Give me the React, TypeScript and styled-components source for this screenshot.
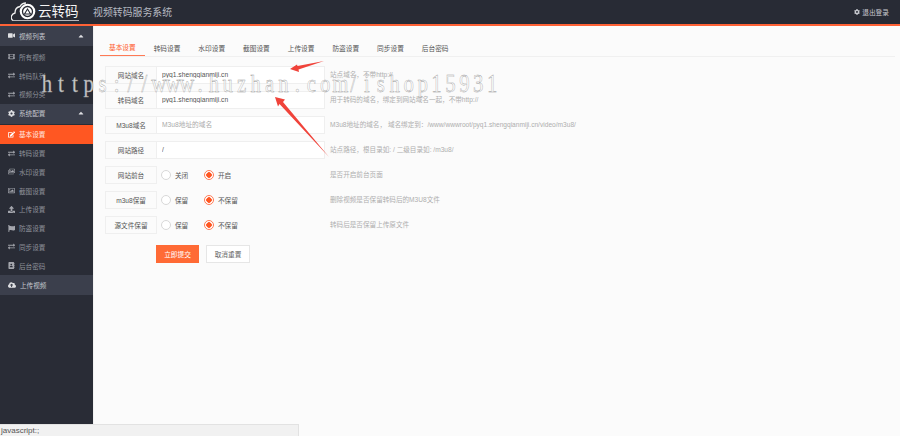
import React from 'react'
import styled, { createGlobalStyle } from 'styled-components'
import {
  FaAddressBook, FaCaretUp, FaCloudUploadAlt, FaCog, FaEdit, FaExchangeAlt, FaFilm, FaFlag,
  FaRegImage, FaUpload, FaVideo, FaRegImages,
} from 'react-icons/fa'

const GlobalStyle = createGlobalStyle`
  html, body { margin: 0; padding: 0; height: 100%; overflow: hidden; }
  body { font-family: "Liberation Sans", "Noto Sans CJK SC", sans-serif; background: #fbfbfb; }
  #root { height: 100%; }
`

const tabs = ['基本设置', '转码设置', '水印设置', '截图设置', '上传设置', '防盗设置', '同步设置', '后台密码']
const watermark = 'https://www.huzhan.com/ishop15931'

const Logo = () => (
  <LogoWrap>
    <svg width="70" height="21" viewBox="0 0 70 21">
      <path d="M2 18.500c-3-2-2-6.500 2-7.500 0-3.500 2-6 5-6.500 1-2 3-3.500 6-3.500" fill="none" stroke="#f2f2f2" strokeWidth="1.300" />
      <path d="M2 18.500h66" stroke="#d8d9dc" strokeWidth="0.800" />
      <circle cx="16.500" cy="9.500" r="7.800" fill="#fff" />
      <circle cx="16.500" cy="9.500" r="5" fill="none" stroke="#282b35" strokeWidth="1.300" />
      <path d="M13.500 12l3-5 3 5z" fill="none" stroke="#282b35" strokeWidth="1.100" />
    </svg>
    <LogoText>云转码</LogoText>
  </LogoWrap>
)

const App = () => {
  return (
    <Page>
      <GlobalStyle />
      <Header>
        <Logo />
        <Title>视频转码服务系统</Title>
        <Logout><FaCog size={6} />退出登录</Logout>
      </Header>
      <Body>
        <Sidebar>
          <Group><FaVideo size={7} /><span>视频列表</span><Caret><FaCaretUp size={8} /></Caret></Group>
          <SubList>
            <Item><FaFilm size={7} />所有视频</Item>
            <Item><FaExchangeAlt size={7} />转码队列</Item>
            <Item><FaExchangeAlt size={7} />视频分类</Item>
          </SubList>
          <Group><FaCog size={7} /><span>系统配置</span><Caret><FaCaretUp size={8} /></Caret></Group>
          <SubList>
            <Item $active><FaEdit size={7} />基本设置</Item>
            <Item><FaExchangeAlt size={7} />转码设置</Item>
            <Item><FaRegImages size={7} />水印设置</Item>
            <Item><FaRegImage size={7} />截图设置</Item>
            <Item><FaUpload size={7} />上传设置</Item>
            <Item><FaFlag size={7} />防盗设置</Item>
            <Item><FaExchangeAlt size={7} />同步设置</Item>
            <Item><FaAddressBook size={7} />后台密码</Item>
          </SubList>
          <Group><FaCloudUploadAlt size={8} /><span>上传视频</span></Group>
        </Sidebar>
        <Main>
          <Tabs>
            {tabs.map((t, i) => <Tab key={t} $active={i === 0}>{t}</Tab>)}
          </Tabs>
          <Form>
            <Row>
              <Label>网站域名</Label>
              <Input defaultValue="pyq1.shengqianmiji.cn" />
              <Hint>站点域名，不带http://</Hint>
            </Row>
            <Row>
              <Label>转码域名</Label>
              <Input defaultValue="pyq1.shengqianmiji.cn" />
              <Hint>用于转码的域名，绑定到网站域名一起，不带http://</Hint>
            </Row>
            <Row>
              <Label>M3u8域名</Label>
              <Input placeholder="M3u8地址的域名" />
              <Hint>M3u8地址的域名， 域名绑定到：/www/wwwroot/pyq1.shengqianmiji.cn/video/m3u8/</Hint>
            </Row>
            <Row>
              <Label>网站路径</Label>
              <Input defaultValue="/" />
              <Hint>站点路径，根目录如: / 二级目录如: /m3u8/</Hint>
            </Row>
            <Row>
              <Label>网站前台</Label>
              <Radios>
                <Radio><Dot />关闭</Radio>
                <Radio><Dot $on />开启</Radio>
              </Radios>
              <Hint>是否开启前台页面</Hint>
            </Row>
            <Row>
              <Label>m3u8保留</Label>
              <Radios>
                <Radio><Dot />保留</Radio>
                <Radio><Dot $on />不保留</Radio>
              </Radios>
              <Hint>删除视频是否保留转码后的M3U8文件</Hint>
            </Row>
            <Row>
              <Label>源文件保留</Label>
              <Radios>
                <Radio><Dot />保留</Radio>
                <Radio><Dot $on />不保留</Radio>
              </Radios>
              <Hint>转码后是否保留上传原文件</Hint>
            </Row>
          </Form>
          <Actions>
            <Submit>立即提交</Submit>
            <Reset>取消重置</Reset>
          </Actions>
        </Main>
      </Body>
      <Watermark>
        {watermark.split('').map((c, i) => <WatermarkChar key={i}>{c}</WatermarkChar>)}
      </Watermark>
      <Arrows width="900" height="436" viewBox="0 0 900 436">
        <polygon points="290,69 297,64.500 297.500,66 324,61 298.500,69.500 299,72" fill="#f0433a" />
        <polygon points="275,97 285,99.500 283,102 329,157 279.500,104 278,106.500" fill="#f0433a" />
      </Arrows>
      <StatusBar>javascript:;</StatusBar>
    </Page>
  )
}

const Page = styled.div`
  height: 436px;
  display: flex;
  flex-direction: column;
  position: relative;
  overflow: hidden;
`
const Header = styled.header`
  height: 24px;
  flex: none;
  display: flex;
  align-items: center;
  background: #282b35;
  border-bottom: 2px solid #ff6236;
  padding: 0 11px;
`
const LogoWrap = styled.div`
  width: 82px;
  height: 21px;
  position: relative;
`
const LogoText = styled.span`
  position: absolute;
  left: 27px;
  top: 2px;
  font-size: 13.500px;
  line-height: 16px;
  font-weight: 400;
  color: #f4f4f4;
`
const Title = styled.div`
  font-size: 9.900px;
  color: #b6b9c1;
`
const Logout = styled.div`
  margin-left: auto;
  display: flex;
  align-items: center;
  gap: 2px;
  font-size: 6.700px;
  color: #c8cad0;
`
const Body = styled.div`
  flex: 1;
  display: flex;
  min-height: 0;
`
const Sidebar = styled.aside`
  width: 93px;
  flex: none;
  background: #292c36;
  font-size: 6.600px;
`
const Group = styled.div`
  height: 20px;
  display: flex;
  align-items: center;
  gap: 4px;
  padding: 0 8px 1px;
  box-sizing: border-box;
  background: #3b3f4c;
  color: #c4c6cc;
  svg { flex: none; color: #dfe0e3; }
`
const Caret = styled.span`
  margin-left: auto;
  display: flex;
`
const SubList = styled.div`
  padding-top: 1.400px;
`
const Item = styled.div<{ $active?: boolean }>`
  height: 18.750px;
  display: flex;
  align-items: center;
  gap: 4px;
  padding-left: 8px;
  background: ${p => (p.$active ? '#ff5722' : 'transparent')};
  color: ${p => (p.$active ? '#ffe9e0' : '#8f929b')};
  svg { flex: none; color: ${p => (p.$active ? '#fff' : '#a4a6ad')}; }
`
const Main = styled.main`
  flex: 1;
  min-width: 0;
  background: #fbfbfb;
  border-left: 1px solid #f1f1f1;
  padding: 13px 5px 0 6px;
  font-size: 6.600px;
`
const Tabs = styled.nav`
  display: flex;
  height: 17px;
  border-bottom: 1px solid #f0f0f0;
`
const Tab = styled.div<{ $active?: boolean }>`
  width: 44.700px;
  height: 17px;
  box-sizing: border-box;
  display: flex;
  align-items: center;
  justify-content: center;
  font-size: 6.700px;
  color: ${p => (p.$active ? '#ff5a2c' : '#555')};
  border-bottom: ${p => (p.$active ? '1px solid #ff7a55' : 'none')};
`
const Form = styled.div`
  display: grid;
  row-gap: 7.500px;
  margin-top: 9px;
  padding-left: 5px;
`
const Row = styled.div`
  display: flex;
  align-items: center;
  height: 17.500px;
`
const Label = styled.div`
  width: 52px;
  height: 100%;
  flex: none;
  box-sizing: border-box;
  display: flex;
  align-items: center;
  justify-content: center;
  background: #fbfbfb;
  border: 1px solid #efefef;
  color: #555;
`
const Input = styled.input`
  width: 169px;
  height: 100%;
  flex: none;
  box-sizing: border-box;
  margin: 0 5px 0 -1px;
  padding: 0 0 0 5px;
  background: #fff;
  border: 1px solid #efefef;
  outline: none;
  font: 6.700px "Liberation Sans", "Noto Sans CJK SC", sans-serif;
  color: #555;
  &::placeholder { color: #aaa; opacity: 1; }
`
const Radios = styled.div`
  width: 173px;
  flex: none;
  display: flex;
  padding-left: 4px;
  box-sizing: border-box;
`
const Radio = styled.label`
  width: 43px;
  display: flex;
  align-items: center;
  gap: 4px;
  color: #555;
  white-space: nowrap;
`
const Dot = styled.span<{ $on?: boolean }>`
  width: 10px;
  height: 10px;
  flex: none;
  box-sizing: border-box;
  border-radius: 50%;
  border: 1px solid ${p => (p.$on ? '#ff7a55' : '#d8d8d8')};
  background: ${p => (p.$on ? 'radial-gradient(circle, #ff5722 0 2.500px, #fff 3px)' : '#fff')};
`
const Hint = styled.div`
  color: #aeaeae;
  white-space: nowrap;
  margin-top: -1px;
`
const Actions = styled.div`
  display: flex;
  gap: 7px;
  margin: 11px 0 0 56px;
`
const Submit = styled.button`
  width: 43px;
  height: 18px;
  padding: 0;
  border: none;
  background: #ff6a35;
  color: #fff;
  font: 6.700px "Liberation Sans", "Noto Sans CJK SC", sans-serif;
`
const Reset = styled.button`
  width: 44px;
  height: 18px;
  padding: 0;
  box-sizing: border-box;
  border: 1px solid #e6e6e6;
  background: #fff;
  color: #666;
  font: 6.700px "Liberation Sans", "Noto Sans CJK SC", sans-serif;
`
/* the watermark is a fixed-pitch serif: one cell per letter, squeezed a little */
const Watermark = styled.div`
  position: absolute;
  left: 40px;
  top: 69px;
  display: flex;
  transform: scaleX(0.8);
  transform-origin: left top;
  font-family: "Liberation Serif", serif;
  font-size: 26px;
  line-height: 30px;
  white-space: nowrap;
  color: rgba(255, 255, 255, 0.75);
  -webkit-text-stroke: 0.4px #999;
  pointer-events: none;
`
const WatermarkChar = styled.span`
  width: 17.400px;
  flex: none;
  text-align: center;
`
const Arrows = styled.svg`
  position: absolute;
  left: 0;
  top: 0;
  pointer-events: none;
`
const StatusBar = styled.div`
  position: absolute;
  left: 0;
  bottom: 0;
  width: 299px;
  height: 12px;
  padding-left: 1px;
  box-sizing: border-box;
  background: #f1f1f1;
  border-top: 1px solid #e2e2e2;
  border-right: 1px solid #e2e2e2;
  font-size: 8px;
  line-height: 11px;
  color: #555;
`

export default App
